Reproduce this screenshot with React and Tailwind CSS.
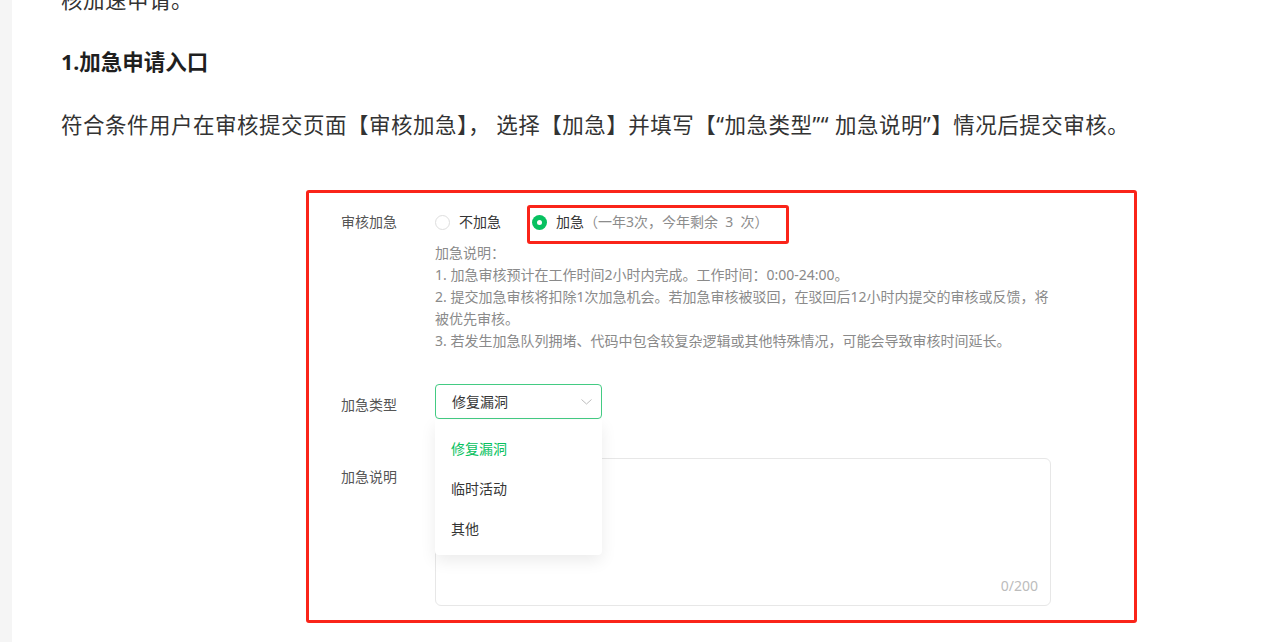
const font = { fontFamily: '"Noto Sans", "Noto Sans CJK SC", sans-serif' };

function Radio({ checked, children }) {
  return (
    <span className="flex items-center gap-[9px]">
      {checked ? (
        <span className="flex h-[15px] w-[15px] items-center justify-center rounded-full bg-[#07c160]">
          <span className="h-[5px] w-[5px] rounded-full bg-white" />
        </span>
      ) : (
        <span className="h-[15px] w-[15px] rounded-full border border-[#dedede] bg-white" />
      )}
      <span className="text-[#353535]">{children}</span>
    </span>
  );
}

function App() {
  const types = ["修复漏洞", "临时活动", "其他"];

  return (
    <div className="flex min-h-screen bg-white" style={font}>
      <div className="w-3 shrink-0 bg-[#f5f5f5]" />

      <div className="flex-1 overflow-hidden pl-[49px]">
        <p className="mt-[-16px] text-[21.5px] leading-[32px] tracking-[0.5px] text-[#333]">核加速申请。</p>

        <h3 className="mt-[30px] text-[21.5px] font-bold leading-[32px] text-[#1f1f1f]">1.加急申请入口</h3>

        <p className="mt-[31px] whitespace-nowrap text-[21.5px] leading-[32px] tracking-[0.5px] text-[#333]">
          符合条件用户在审核提交页面【审核加急】， 选择【加急】并填写【“加急类型”“ 加急说明”】情况后提交审核。
        </p>

        {/* screenshot of the form */}
        <div className="ml-[245px] mt-[49px] h-[433px] w-[831px] rounded-[3px] border-[3px] border-[#fa2419] pl-[32px] pt-[18px] text-[14px]">

          {/* 审核加急 */}
          <div className="flex">
            <div className="w-[94px] shrink-0 leading-[22px] text-[#555]">审核加急</div>
            <div>
              <div className="flex h-[22px] items-center gap-[31px] leading-[22px]">
                <Radio>不加急</Radio>
                <span className="relative">
                  <Radio checked>
                    加急<span className="text-[#8c8c8c]">（一年3次，今年剩余&nbsp;&nbsp;3&nbsp;&nbsp;次）</span>
                  </Radio>
                  <span className="absolute left-[-5px] top-[-6px] h-[39px] w-[262px] rounded-[3px] border-[3px] border-[#fa2419]" />
                </span>
              </div>
              <div className="mt-[9px] whitespace-nowrap text-[14px] leading-[22px] text-[#8a8a8a]">
                <div>加急说明：</div>
                <div>1. 加急审核预计在工作时间2小时内完成。工作时间：0:00-24:00。</div>
                <div>2. 提交加急审核将扣除1次加急机会。若加急审核被驳回，在驳回后12小时内提交的审核或反馈，将</div>
                <div>被优先审核。</div>
                <div>3. 若发生加急队列拥堵、代码中包含较复杂逻辑或其他特殊情况，可能会导致审核时间延长。</div>
              </div>
            </div>
          </div>

          {/* 加急类型 */}
          <div className="mt-[32px] flex">
            <div className="w-[94px] shrink-0 pt-[10px] leading-[22px] text-[#555]">加急类型</div>
            <div className="relative z-10">
              <div className="flex h-[35px] w-[167px] items-center justify-between rounded-[4px] border border-[#43cb83] pl-[16px] pr-[9px] text-[#353535]">
                <span>修复漏洞</span>
                <svg width="11" height="6" viewBox="0 0 11 6" fill="none" className="mt-[1px]">
                  <polyline points="0.5,0.5 5.5,5 10.5,0.5" stroke="#bdbdbd" strokeWidth="1" />
                </svg>
              </div>
              <div className="absolute left-0 top-[36px] w-[167px] rounded-b-[4px] bg-white pb-[7px] pt-[8px] shadow-[0_6px_16px_rgba(0,0,0,0.08)]">
                {types.map((t, i) => (
                  <div
                    key={t}
                    className={`flex h-[40px] items-center pl-[16px] ${i === 0 ? "text-[#07c160]" : "text-[#353535]"}`}
                  >
                    {t}
                  </div>
                ))}
              </div>
            </div>
          </div>

          {/* 加急说明 */}
          <div className="mt-[39px] flex">
            <div className="w-[94px] shrink-0 pt-[8px] leading-[22px] text-[#555]">加急说明</div>
            <div className="flex h-[148px] w-[616px] flex-col items-end justify-end rounded-[6px] border border-[#e7e7e7] pb-[9px] pr-[12px]">
              <span className="text-[14px] leading-[20px] text-[#bcbcbc]">0/200</span>
            </div>
          </div>

        </div>
      </div>
    </div>
  );
}

export default App;
